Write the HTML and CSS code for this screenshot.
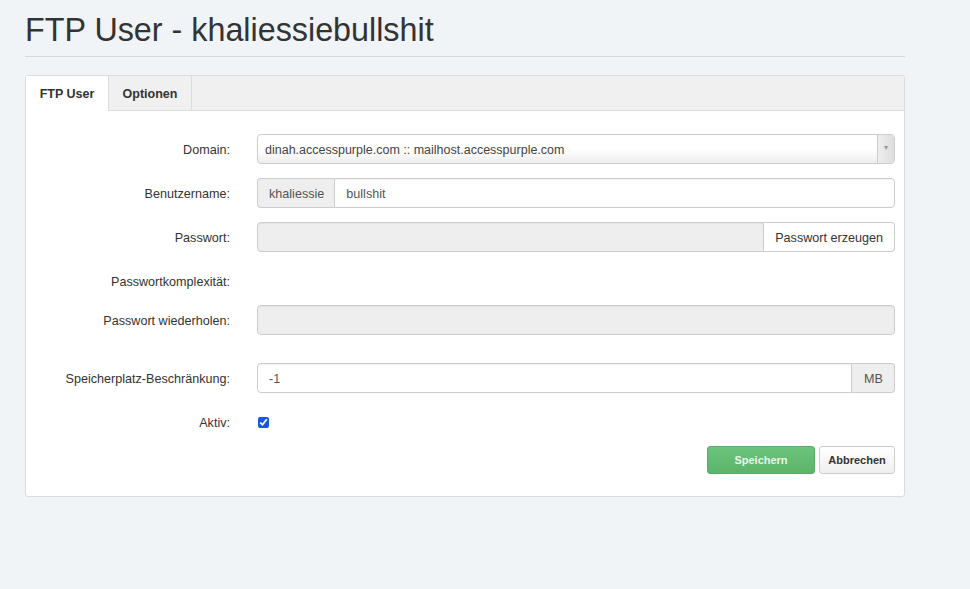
FILE: index.html
```html
<html lang="de">
<head>
    <meta charset="UTF-8">
    <meta name="viewport" content="width=device-width, initial-scale=1.0">
    <title>FTP User - khaliessiebullshit</title>
    <link rel="stylesheet" href="styles.css">
</head>
<body>
    <div class="page">
        <h1 class="page-title">FTP User - khaliessiebullshit</h1>
        <div class="panel">
            <ul class="tabs">
                <li class="tab active">FTP User</li>
                <li class="tab">Optionen</li>
            </ul>
            <form class="panel-body">
                <div class="row">
                    <label class="row-label">Domain:</label>
                    <div class="row-field">
                        <div class="select">
                            <span class="select-text">dinah.accesspurple.com :: mailhost.accesspurple.com</span>
                            <span class="select-arrow">&#9662;</span>
                        </div>
                    </div>
                </div>
                <div class="row">
                    <label class="row-label">Benutzername:</label>
                    <div class="row-field group">
                        <span class="addon">khaliessie</span>
                        <input class="input" type="text" value="bullshit">
                    </div>
                </div>
                <div class="row">
                    <label class="row-label">Passwort:</label>
                    <div class="row-field group">
                        <input class="input" type="password" disabled>
                        <button type="button" class="btn btn-plain">Passwort erzeugen</button>
                    </div>
                </div>
                <div class="row row-short">
                    <label class="row-label">Passwortkomplexität:</label>
                    <div class="row-field"></div>
                </div>
                <div class="row row-spaced">
                    <label class="row-label">Passwort wiederholen:</label>
                    <div class="row-field">
                        <input class="input" type="password" disabled>
                    </div>
                </div>
                <div class="row">
                    <label class="row-label">Speicherplatz-Beschränkung:</label>
                    <div class="row-field group">
                        <input class="input" type="text" value="-1">
                        <span class="addon addon-right">MB</span>
                    </div>
                </div>
                <div class="row row-tight">
                    <label class="row-label">Aktiv:</label>
                    <div class="row-field">
                        <input class="check" type="checkbox" checked>
                    </div>
                </div>
                <div class="actions">
                    <button type="button" class="btn btn-save">Speichern</button>
                    <button type="button" class="btn btn-cancel">Abbrechen</button>
                </div>
            </form>
        </div>
    </div>
</body>
</html>
```

FILE: styles.css
```css
body {
    margin: 0;
    padding: 0;
    background: #f1f4f7;
    font-family: "Liberation Sans", Arial, sans-serif;
    color: #333;
}
.page {
    width: 880px;
    padding: 0 0 0 25px;
}
.page-title {
    margin: 0;
    padding: 12px 0 8px;
    font-size: 32.3px;
    font-weight: normal;
    line-height: 36px;
    color: #333;
    border-bottom: 1px solid #d5d8dc;
}
.panel {
    margin-top: 18px;
    background: #fff;
    border: 1px solid #dcdcdc;
    border-radius: 3px;
}
.tabs {
    list-style: none;
    margin: 0;
    padding: 0;
    display: flex;
    height: 34px;
    background: #f0f0f0;
    border-bottom: 1px solid #dcdcdc;
    border-radius: 3px 3px 0 0;
}
.tab {
    width: 82px;
    text-align: center;
    font-size: 12.5px;
    font-weight: bold;
    line-height: 36px;
    color: #333;
    border-right: 1px solid #dcdcdc;
}
.tab.active {
    background: #fff;
    height: 35px;
}
.panel-body {
    margin: 0;
    padding: 23px 9px 22px 0;
}
.row {
    display: flex;
    align-items: center;
    height: 30px;
    margin-bottom: 14px;
}
.row-short {
    height: 25px;
    align-items: flex-start;
    line-height: 31px;
}
.row-spaced {
    margin-bottom: 28px;
}
.row-tight {
    margin-bottom: 9px;
}
.row-label {
    width: 204px;
    flex: none;
    text-align: right;
    font-size: 12.6px;
    color: #333;
    padding-top: 1px;
}
.row-field {
    flex: 1;
    margin-left: 27px;
    display: flex;
    align-items: center;
    height: 100%;
}
.input {
    flex: 1;
    height: 30px;
    box-sizing: border-box;
    margin: 0;
    padding: 1px 11px 0;
    border: 1px solid #ccc;
    border-radius: 4px;
    font-family: inherit;
    font-size: 12.6px;
    color: #555;
    background: #fff;
    box-shadow: inset 0 1px 1px rgba(0, 0, 0, 0.05);
    outline: none;
}
.input:disabled {
    background: #eee;
}
.select {
    flex: 1;
    display: flex;
    height: 30px;
    box-sizing: border-box;
    border: 1px solid #ccc;
    border-radius: 4px;
    background: linear-gradient(#fff 50%, #eee);
    font-size: 12.5px;
    color: #444;
}
.select-text {
    flex: 1;
    padding: 1px 7px 0;
    line-height: 28px;
}
.select-arrow {
    width: 16px;
    border-left: 1px solid #ccc;
    background: linear-gradient(to right, #eee, #ddd);
    color: #999;
    font-size: 8px;
    text-align: center;
    line-height: 26px;
    border-radius: 0 3px 3px 0;
}
.group .addon,
.group .input,
.group .btn {
    border-radius: 0;
}
.group > :first-child {
    border-radius: 4px 0 0 4px;
}
.group > :last-child {
    border-radius: 0 4px 4px 0;
}
.addon {
    height: 30px;
    box-sizing: border-box;
    padding: 1px 10px 0 11px;
    line-height: 28px;
    font-size: 12.6px;
    color: #555;
    background: #eee;
    border: 1px solid #ccc;
    border-right: 0;
}
.addon-right {
    border-right: 1px solid #ccc;
    border-left: 0;
    padding: 1px 11px 0 12px;
}
.btn {
    margin: 0;
    box-sizing: border-box;
    font-family: inherit;
    cursor: pointer;
}
.btn-plain {
    height: 30px;
    padding: 1px 11px 0;
    font-size: 12.6px;
    color: #333;
    background: #fff;
    border: 1px solid #ccc;
    border-left: 0;
}
.check {
    margin: 0 0 0 1px;
    width: 11px;
    height: 11px;
    accent-color: #1a56db;
}
.actions {
    display: flex;
    justify-content: flex-end;
    gap: 4px;
}
.btn-save,
.btn-cancel {
    height: 28px;
    font-size: 11px;
    font-weight: bold;
    border-radius: 3px;
}
.btn-save {
    width: 108px;
    color: #e8f6ea;
    background: linear-gradient(#6cc37b, #5cb46b);
    border: 1px solid #58ad67;
}
.btn-cancel {
    width: 76px;
    color: #333;
    background: linear-gradient(#fff, #efefef);
    border: 1px solid #ccc;
}
```
